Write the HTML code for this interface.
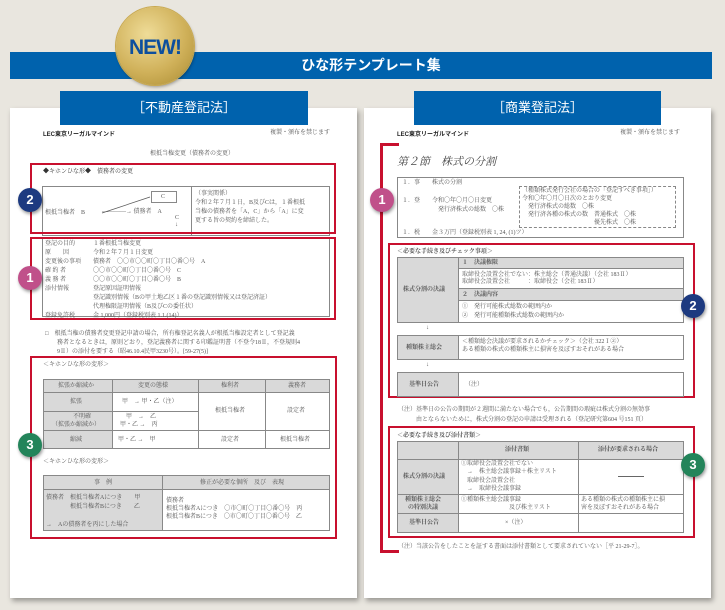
<!DOCTYPE html>
<html><head><meta charset="utf-8"><style>
*{margin:0;padding:0;box-sizing:border-box}
body{width:725px;height:610px;background:#e9e6df;position:relative;overflow:hidden;font-family:"Liberation Sans","Noto Sans CJK JP",sans-serif;color:#555}
.a{position:absolute;white-space:nowrap}
.t{font-family:"Liberation Serif","Noto Serif CJK SC",serif;font-size:6px;line-height:8px;color:#555}
.b{font-weight:bold}
.paper{position:absolute;background:#fff;box-shadow:2px 3px 5px rgba(0,0,0,.35)}
.red{position:absolute;border:2.5px solid #c8102e}
.box{position:absolute;border:1px solid #888}
.g{position:absolute;background:#d9d9d9}
.ln{position:absolute;background:#888}
.c{position:absolute;width:24px;height:24px;border-radius:50%;color:#fff;font-weight:bold;font-size:13px;line-height:24px;text-align:center;box-shadow:1px 2px 3px rgba(0,0,0,.4)}
.sub{position:absolute;background:#0062ad;color:#fff;text-align:center;font-size:13px;line-height:34px}
</style></head><body>
<div class="a" style="left:10px;top:52px;width:702px;height:27px;background:#0062ad"></div>
<div class="a" style="left:10px;top:52px;width:702px;height:27px;color:#fff;text-align:center;font-size:14px;line-height:27px;font-weight:bold;padding-left:20px">ひな形テンプレート集</div>

<div class="paper" style="left:10px;top:108px;width:347px;height:490px"></div>
<div class="paper" style="left:364px;top:108px;width:347px;height:490px"></div>
<div class="sub" style="left:60px;top:91px;width:248px;height:34px">［不動産登記法］</div>
<div class="sub" style="left:414px;top:91px;width:247px;height:34px">［商業登記法］</div>

<div class="a" style="left:116px;top:7px;width:78px;height:78px;border-radius:50%;background:radial-gradient(circle at 40% 35%,#efdc98,#d0b15a 55%,#a98a30);box-shadow:0 0 0 1px #c9a94f,1px 2px 3px rgba(0,0,0,.35)"></div>
<svg class="a" style="left:116px;top:7px" width="78" height="78"><text x="39" y="47" text-anchor="middle" font-family="Liberation Sans, sans-serif" font-weight="bold" font-size="21" fill="#0d4f9e" letter-spacing="-1">NEW!</text></svg>

<!-- LEFT -->
<div class="a b" style="left:43px;top:129px;font-size:6px;color:#222">LEC東京リーガルマインド</div>
<div class="a t" style="left:270px;top:129px">複製・頒布を禁じます</div>
<div class="a t" style="left:150px;top:150px">根抵当権変更（債務者の変更）</div>

<div class="box" style="left:42px;top:186px;width:288px;height:50px"></div>
<div class="ln" style="left:191px;top:186px;width:1px;height:50px"></div>
<div class="box" style="left:151px;top:191px;width:26px;height:12px"></div>
<div class="a t" style="left:161px;top:193px">C</div>
<div class="a t" style="left:45px;top:209px">根抵当権者　B</div>
<div class="a t" style="left:102px;top:208px">――――→ 債務者　A</div>
<div class="a t" style="left:175px;top:215px;line-height:7px">C<br>↓</div>
<div class="a t" style="left:195px;top:190px;line-height:9px">（事実関係）<br>令和２年７月１日，B及びCは，１番根抵<br>当権の債務者を「A，C」から「A」に変<br>更する旨の契約を締結した。</div>
<svg class="a" style="left:100px;top:195px" width="52" height="20"><line x1="2" y1="18" x2="50" y2="2" stroke="#555" stroke-width=".7"/></svg>

<div class="red" style="left:30px;top:163px;width:306px;height:71px"></div>
<div class="a t" style="left:43px;top:168px;color:#333">◆キホンひな形◆　債務者の変更</div>

<div class="box" style="left:42px;top:237px;width:288px;height:80px;border-top:none"></div>
<div class="red" style="left:30px;top:237px;width:306px;height:83px"></div>
<div class="a t" style="left:45px;top:240px;line-height:9px">登記の目的<br>原　　因<br>変更後の事項<br>確 約 者<br>義 務 者<br>添付情報<br><br><br>登録免許税</div>
<div class="a t" style="left:93px;top:240px;line-height:9px">１番根抵当権変更<br>令和２年７月１日変更<br>債務者　〇〇市〇〇町〇丁目〇番〇号　A<br>〇〇市〇〇町〇丁目〇番〇号　C<br>〇〇市〇〇町〇丁目〇番〇号　B<br>登記原因証明情報<br>登記識別情報（Bの甲土地乙区１番の登記識別情報又は登記済証）<br>代理権限証明情報（B及びCの委任状）<br>金 1,000円（登録税別表 1.1.(14)）</div>
<div class="a t" style="left:45px;top:330px;line-height:9px">□　根抵当権の債務者変更登記申請の場合，所有権登記名義人が根抵当権設定者として登記義<br>　　務者となるときは，原則どおり，登記義務者に関する印鑑証明書（不登令18Ⅱ，不登規則4<br>　　9Ⅱ）の添付を要する（昭46.10.4民甲3230号）。[59-27(5)]</div>

<div class="red" style="left:30px;top:356px;width:307px;height:183px"></div>
<div class="a t" style="left:43px;top:361px">＜キホンひな形の変形＞</div>
<div class="g" style="left:43px;top:379px;width:286px;height:13px"></div>
<div class="g" style="left:43px;top:392px;width:69px;height:56px"></div>
<div class="box" style="left:43px;top:379px;width:287px;height:70px"></div>
<div class="ln" style="left:112px;top:379px;width:1px;height:70px"></div>
<div class="ln" style="left:198px;top:379px;width:1px;height:70px"></div>
<div class="ln" style="left:265px;top:379px;width:1px;height:70px"></div>
<div class="ln" style="left:43px;top:392px;width:287px;height:1px"></div>
<div class="ln" style="left:43px;top:411px;width:155px;height:1px"></div>
<div class="ln" style="left:43px;top:430px;width:287px;height:1px"></div>
<div class="a t" style="left:58px;top:382px">拡張か縮減か</div>
<div class="a t" style="left:138px;top:382px">変更の態様</div>
<div class="a t" style="left:221px;top:382px">権利者</div>
<div class="a t" style="left:288px;top:382px">義務者</div>
<div class="a t" style="left:70px;top:398px">拡張</div>
<div class="a t" style="left:52px;top:413px;text-align:center;line-height:8px">　　不明確<br>（拡張か縮減か）</div>
<div class="a t" style="left:70px;top:436px">縮減</div>
<div class="a t" style="left:122px;top:398px">甲　→ 甲・乙（注）</div>
<div class="a t" style="left:120px;top:413px;line-height:8px">　甲　→　乙<br>甲・乙 →　丙</div>
<div class="a t" style="left:118px;top:436px">甲・乙 →　甲</div>
<div class="a t" style="left:215px;top:407px">根抵当権者</div>
<div class="a t" style="left:287px;top:407px">設定者</div>
<div class="a t" style="left:221px;top:436px">設定者</div>
<div class="a t" style="left:280px;top:436px">根抵当権者</div>
<div class="a t" style="left:43px;top:458px">＜キホンひな形の変形＞</div>
<div class="g" style="left:43px;top:475px;width:286px;height:14px"></div>
<div class="g" style="left:43px;top:489px;width:119px;height:41px"></div>
<div class="box" style="left:43px;top:475px;width:287px;height:56px"></div>
<div class="ln" style="left:162px;top:475px;width:1px;height:56px"></div>
<div class="ln" style="left:43px;top:489px;width:287px;height:1px"></div>
<div class="a t" style="left:94px;top:479px">事　例</div>
<div class="a t" style="left:200px;top:479px">修正が必要な個所　及び　表現</div>
<div class="a t" style="left:46px;top:494px;line-height:9px">債務者　根抵当権者Aにつき　　甲<br>　　　　根抵当権者Bにつき　　乙<br><br>→　Aの債務者を丙にした場合</div>
<div class="a t" style="left:166px;top:497px;line-height:8px">債務者<br>根抵当権者Aにつき　〇市〇町〇丁目〇番〇号　丙<br>根抵当権者Bにつき　〇市〇町〇丁目〇番〇号　乙</div>

<div class="c" style="left:18px;top:188px;background:#1d3a80">2</div>
<div class="c" style="left:18px;top:266px;background:#c0508a">1</div>
<div class="c" style="left:18px;top:433px;background:#23845a">3</div>

<!-- RIGHT -->
<div class="a b" style="left:397px;top:129px;font-size:6px;color:#222">LEC東京リーガルマインド</div>
<div class="a t" style="left:620px;top:129px">複製・頒布を禁じます</div>
<div class="a" style="left:380px;top:143px;width:2.5px;height:410px;background:#c8102e"></div>
<div class="a" style="left:380px;top:143px;width:19px;height:2.5px;background:#c8102e"></div>
<div class="a" style="left:380px;top:550px;width:19px;height:2.5px;background:#c8102e"></div>
<div class="a" style="left:397px;top:153px;font-size:11px;font-style:italic;color:#444;font-family:'Liberation Serif','Noto Serif CJK SC',serif">第２節　株式の分割</div>
<div class="box" style="left:397px;top:177px;width:287px;height:61px"></div>
<div class="a" style="left:519px;top:186px;width:157px;height:42px;border:1px dashed #888"></div>
<div class="a t" style="left:402px;top:179px;line-height:9px">１．事　　株式の分割<br><br>１．登　　令和〇年〇月〇日変更<br>　　　　　　発行済株式の総数　〇株</div>
<div class="a t" style="left:522px;top:187px;line-height:8px">（種類株式発行会社の場合の「登記すべき事項」）<br>令和〇年〇月〇日次のとおり変更<br>　発行済株式の総数　〇株<br>　発行済各種の株式の数　普通株式　〇株<br>　　　　　　　　　　　　優先株式　〇株</div>
<div class="a t" style="left:402px;top:229px">１．税　　金３万円（登録税別表 1, 24, (1)ツ）</div>

<div class="red" style="left:388px;top:243px;width:307px;height:155px"></div>
<div class="a t b" style="left:397px;top:248px">＜必要な手続き及びチェック事項＞</div>
<div class="g" style="left:397px;top:257px;width:61px;height:65px"></div>
<div class="g" style="left:458px;top:257px;width:225px;height:11px"></div>
<div class="g" style="left:458px;top:288px;width:225px;height:12px"></div>
<div class="box" style="left:397px;top:257px;width:287px;height:66px"></div>
<div class="ln" style="left:458px;top:257px;width:1px;height:66px"></div>
<div class="ln" style="left:458px;top:268px;width:226px;height:1px"></div>
<div class="ln" style="left:458px;top:288px;width:226px;height:1px"></div>
<div class="ln" style="left:458px;top:300px;width:226px;height:1px"></div>
<div class="a t b" style="left:403px;top:286px">株式分割の決議</div>
<div class="a t b" style="left:462px;top:259px">１　決議権限</div>
<div class="a t" style="left:462px;top:272px;line-height:7px">取締役会設置会社でない：株主総会（普通決議）（会社 183Ⅱ）<br>取締役会設置会社　　　：取締役会（会社 183Ⅱ）</div>
<div class="a t b" style="left:462px;top:291px">２　決議内容</div>
<div class="a t" style="left:462px;top:303px;line-height:9px">①　発行可能株式総数の範囲内か<br>②　発行可能種類株式総数の範囲内か</div>
<div class="a t" style="left:426px;top:324px">↓</div>
<div class="g" style="left:397px;top:335px;width:61px;height:24px"></div>
<div class="box" style="left:397px;top:335px;width:287px;height:25px"></div>
<div class="ln" style="left:458px;top:335px;width:1px;height:25px"></div>
<div class="a t b" style="left:406px;top:344px">種類株主総会</div>
<div class="a t" style="left:462px;top:338px;line-height:8px">＜種類総会決議が要求されるかチェック＞（会社 322Ⅰ②）<br>ある種類の株式の種類株主に損害を及ぼすおそれがある場合</div>
<div class="a t" style="left:426px;top:361px">↓</div>
<div class="g" style="left:397px;top:372px;width:61px;height:24px"></div>
<div class="box" style="left:397px;top:372px;width:287px;height:25px"></div>
<div class="ln" style="left:458px;top:372px;width:1px;height:25px"></div>
<div class="a t b" style="left:409px;top:381px">基準日公告</div>
<div class="a t" style="left:465px;top:381px">（注）</div>
<div class="a t" style="left:398px;top:405px;line-height:10px">（注）基準日の公告の期間が２週間に満たない場合でも，公告期間の瑕疵は株式分割の無効事<br>　　　由とならないために，株式分割の登記の申請は受理される（登記研究第604 号151 頁）</div>

<div class="red" style="left:388px;top:426px;width:307px;height:112px"></div>
<div class="a t b" style="left:397px;top:432px">＜必要な手続き及び添付書類＞</div>
<div class="g" style="left:397px;top:441px;width:286px;height:18px"></div>
<div class="g" style="left:397px;top:459px;width:61px;height:73px"></div>
<div class="box" style="left:397px;top:441px;width:287px;height:92px"></div>
<div class="ln" style="left:458px;top:441px;width:1px;height:92px"></div>
<div class="ln" style="left:578px;top:441px;width:1px;height:92px"></div>
<div class="ln" style="left:397px;top:459px;width:287px;height:1px"></div>
<div class="ln" style="left:397px;top:494px;width:287px;height:1px"></div>
<div class="ln" style="left:397px;top:513px;width:287px;height:1px"></div>
<div class="a t b" style="left:505px;top:446px">添付書類</div>
<div class="a t b" style="left:598px;top:446px">添付が要求される場合</div>
<div class="a t b" style="left:403px;top:473px">株式分割の決議</div>
<div class="a t" style="left:461px;top:460px;line-height:8.3px">①取締役会設置会社でない<br>　→　株主総会議事録＋株主リスト<br>　取締役会設置会社<br>　→　取締役会議事録</div>
<div class="a" style="left:618px;top:476px;width:26px;height:1px;background:#666"></div>
<div class="a t b" style="left:405px;top:496px;line-height:8px;text-align:center">種類株主総会<br>の特別決議</div>
<div class="a t" style="left:461px;top:496px;line-height:8px">①種類株主総会議事録<br>　　　　　　　　及び株主リスト</div>
<div class="a t" style="left:581px;top:496px;line-height:8px">ある種類の株式の種類株主に損<br>害を及ぼすおそれがある場合</div>
<div class="a t b" style="left:409px;top:519px">基準日公告</div>
<div class="a t" style="left:505px;top:519px">×（注）</div>
<div class="a t" style="left:398px;top:543px">（注）当該公告をしたことを証する書面は添付書類として要求されていない［平 21-29-7］。</div>

<div class="c" style="left:370px;top:188px;background:#c0508a">1</div>
<div class="c" style="left:681px;top:294px;background:#1d3a80">2</div>
<div class="c" style="left:681px;top:453px;background:#23845a">3</div>
</body></html>
